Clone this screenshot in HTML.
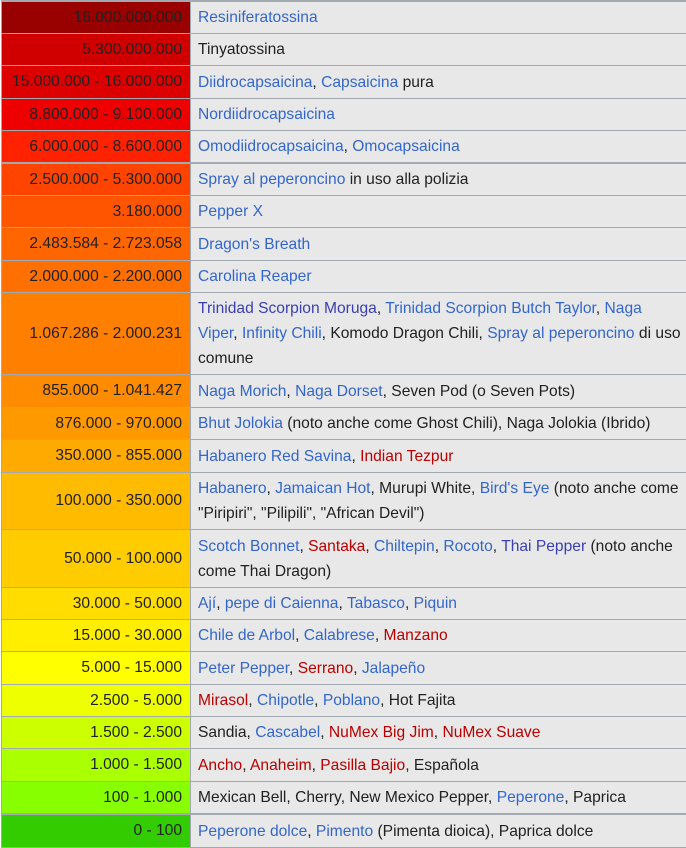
<!DOCTYPE html>
<html><head><meta charset="utf-8"><style>
body{margin:0;background:#fff;width:686px;height:848px;overflow:hidden;font-family:"Liberation Sans",sans-serif;font-size:15.6px;color:#202122}
#t{position:absolute;left:1px;top:0;width:690px;background:#a2a9b1;padding-top:2px}
.r{display:flex;margin-bottom:1px;margin-left:1px}
.r.th{margin-bottom:2px}
.a{width:188px;flex:none;text-align:right;padding-right:8px;box-sizing:border-box;display:flex;align-items:center;justify-content:flex-end;color:#202122}
.b{flex:1;background:#e8e8e8;margin-left:1px;padding:0 10px 0 7px;display:flex;align-items:center;line-height:25px}
.l{color:#3366cc}.d{color:#ba0000}.p{color:#3a3eb0}
</style></head><body><div id="t">
<div class="r" style="height:31px"><div class="a" style="background:#990000">16.000.000.000</div><div class="b"><span><span class="l">Resiniferatossina</span></span></div></div>
<div class="r" style="height:31px"><div class="a" style="background:#d00000">5.300.000.000</div><div class="b"><span>Tinyatossina</span></div></div>
<div class="r" style="height:32px"><div class="a" style="background:#dd0000">15.000.000 - 16.000.000</div><div class="b"><span><span class="l">Diidrocapsaicina</span>, <span class="l">Capsaicina</span> pura</span></div></div>
<div class="r" style="height:31px"><div class="a" style="background:#ee0000">8.800.000 - 9.100.000</div><div class="b"><span><span class="l">Nordiidrocapsaicina</span></span></div></div>
<div class="r th" style="height:31px"><div class="a" style="background:#ff2200">6.000.000 - 8.600.000</div><div class="b"><span><span class="l">Omodiidrocapsaicina</span>, <span class="l">Omocapsaicina</span></span></div></div>
<div class="r" style="height:31px"><div class="a" style="background:#ff4400">2.500.000 - 5.300.000</div><div class="b"><span><span class="l">Spray al peperoncino</span> in uso alla polizia</span></div></div>
<div class="r" style="height:31px"><div class="a" style="background:#ff5500">3.180.000</div><div class="b"><span><span class="l">Pepper X</span></span></div></div>
<div class="r" style="height:32px"><div class="a" style="background:#ff6600">2.483.584 - 2.723.058</div><div class="b"><span><span class="l">Dragon's Breath</span></span></div></div>
<div class="r" style="height:31px"><div class="a" style="background:#ff7000">2.000.000 - 2.200.000</div><div class="b"><span><span class="l">Carolina Reaper</span></span></div></div>
<div class="r" style="height:81px"><div class="a" style="background:#ff7f00">1.067.286 - 2.000.231</div><div class="b"><span><span class="p">Trinidad Scorpion Moruga</span>, <span class="l">Trinidad Scorpion Butch Taylor</span>, <span class="l">Naga Viper</span>, <span class="l">Infinity Chili</span>, Komodo Dragon Chili, <span class="l">Spray al peperoncino</span> di uso comune</span></div></div>
<div class="r" style="height:32px"><div class="a" style="background:#ff8c00">855.000 - 1.041.427</div><div class="b"><span><span class="l">Naga Morich</span>, <span class="l">Naga Dorset</span>, Seven Pod (o Seven Pots)</span></div></div>
<div class="r" style="height:31px"><div class="a" style="background:#ff9900">876.000 - 970.000</div><div class="b"><span><span class="l">Bhut Jolokia</span> (noto anche come Ghost Chili), Naga Jolokia (Ibrido)</span></div></div>
<div class="r" style="height:32px"><div class="a" style="background:#ffaa00">350.000 - 855.000</div><div class="b"><span><span class="l">Habanero Red Savina</span>, <span class="d">Indian Tezpur</span></span></div></div>
<div class="r" style="height:56px"><div class="a" style="background:#ffbb00">100.000 - 350.000</div><div class="b"><span><span class="l">Habanero</span>, <span class="l">Jamaican Hot</span>, Murupi White, <span class="l">Bird's Eye</span> (noto anche come "Piripiri", "Pilipili", "African Devil")</span></div></div>
<div class="r" style="height:57px"><div class="a" style="background:#ffcc00">50.000 - 100.000</div><div class="b"><span><span class="l">Scotch Bonnet</span>, <span class="d">Santaka</span>, <span class="l">Chiltepin</span>, <span class="l">Rocoto</span>, <span class="p">Thai Pepper</span> (noto anche come Thai Dragon)</span></div></div>
<div class="r" style="height:31px"><div class="a" style="background:#ffdd00">30.000 - 50.000</div><div class="b"><span><span class="l">Ají</span>, <span class="l">pepe di Caienna</span>, <span class="l">Tabasco</span>, <span class="l">Piquin</span></span></div></div>
<div class="r" style="height:31px"><div class="a" style="background:#ffee00">15.000 - 30.000</div><div class="b"><span><span class="l">Chile de Arbol</span>, <span class="l">Calabrese</span>, <span class="d">Manzano</span></span></div></div>
<div class="r" style="height:32px"><div class="a" style="background:#ffff00">5.000 - 15.000</div><div class="b"><span><span class="l">Peter Pepper</span>, <span class="d">Serrano</span>, <span class="l">Jalapeño</span></span></div></div>
<div class="r" style="height:31px"><div class="a" style="background:#eeff00">2.500 - 5.000</div><div class="b"><span><span class="d">Mirasol</span>, <span class="l">Chipotle</span>, <span class="l">Poblano</span>, Hot Fajita</span></div></div>
<div class="r" style="height:31px"><div class="a" style="background:#ccff00">1.500 - 2.500</div><div class="b"><span>Sandia, <span class="l">Cascabel</span>, <span class="d">NuMex Big Jim</span>, <span class="d">NuMex Suave</span></span></div></div>
<div class="r" style="height:32px"><div class="a" style="background:#aaff00">1.000 - 1.500</div><div class="b"><span><span class="d">Ancho</span>, <span class="d">Anaheim</span>, <span class="d">Pasilla Bajio</span>, Española</span></div></div>
<div class="r th" style="height:31px"><div class="a" style="background:#88ff00">100 - 1.000</div><div class="b"><span>Mexican Bell, Cherry, New Mexico Pepper, <span class="l">Peperone</span>, Paprica</span></div></div>
<div class="r" style="height:32px"><div class="a" style="background:#33cc00">0 - 100</div><div class="b"><span><span class="l">Peperone dolce</span>, <span class="l">Pimento</span> (Pimenta dioica), Paprica dolce</span></div></div>
</div></body></html>
